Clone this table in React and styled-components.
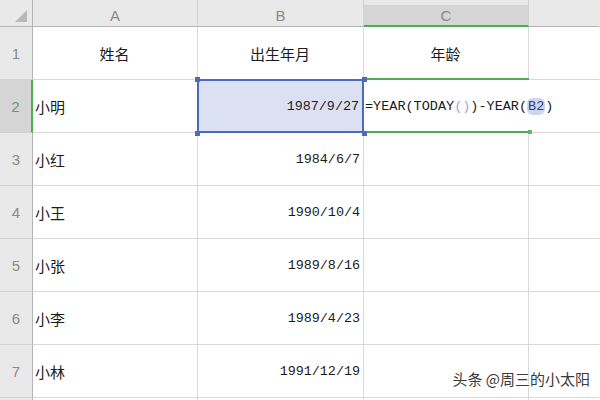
import React from 'react';
import styled, { createGlobalStyle, css } from 'styled-components';

const GlobalStyle = createGlobalStyle`
	html, body {
		margin: 0;
		padding: 0;
		background: #ffffff;
	}
	* {
		box-sizing: border-box;
	}
`;

const cjk = `"Noto Sans CJK SC", "Noto Sans", sans-serif`;
const mono = `"Liberation Mono", "Noto Sans CJK SC", monospace`;

const grid = '#d9d9d9';
const headBg = '#e9e9e9';
const headActive = '#d5d5d5';
const green = '#4caf50';
const blue = '#4a6bc0';

const rows = [
	{ name: '小明', date: '1987/9/27' },
	{ name: '小红', date: '1984/6/7' },
	{ name: '小王', date: '1990/10/4' },
	{ name: '小张', date: '1989/8/16' },
	{ name: '小李', date: '1989/4/23' },
	{ name: '小林', date: '1991/12/19' },
];

export default function App() {
	return (
		<>
			<GlobalStyle />
			<Sheet>
				<Corner>
					<svg width="12" height="12" viewBox="0 0 12 12">
						<polygon points="12,0 12,12 0,12" fill="#b9b9b9" />
					</svg>
				</Corner>
				<ColHead>A</ColHead>
				<ColHead>B</ColHead>
				<ColHead $active>C</ColHead>
				<ColHead $last />

				<RowHead>1</RowHead>
				<Cell $align="center">姓名</Cell>
				<Cell $align="center">出生年月</Cell>
				<Cell $align="center">年龄</Cell>
				<Cell $last />

				{rows.map((r, i) => {
					const n = i + 2;
					const first = i === 0;
					return (
						<React.Fragment key={n}>
							<RowHead $active={first}>{n}</RowHead>
							<Cell>{r.name}</Cell>
							<Cell $align="right" $mono $selected={first}>
								{r.date}
								{first && (
									<>
										<Handle $pos="tl" />
										<Handle $pos="tr" />
										<Handle $pos="bl" />
										<Handle $pos="br" />
									</>
								)}
							</Cell>
							{first ? (
								<EditCell>
									<Formula>
										=YEAR(TODAY<Soft>()</Soft>)-YEAR(<Ref>B2</Ref>)
									</Formula>
									<FillHandle />
								</EditCell>
							) : (
								<Cell />
							)}
							<Cell $last $noRight={first} />
						</React.Fragment>
					);
				})}

				<RowHead />
				<Cell />
				<Cell />
				<Cell />
				<Cell $last />

				<Watermark>头条 @周三的小太阳</Watermark>
			</Sheet>
		</>
	);
}

const Sheet = styled.div`
	position: relative;
	display: grid;
	grid-template-columns: 33px 165px 166px 165px 71px;
	grid-template-rows: 27px repeat(8, 53px);
	width: 600px;
	height: 400px;
	overflow: hidden;
	background: #ffffff;
`;

const Corner = styled.div`
	display: flex;
	align-items: flex-end;
	justify-content: flex-end;
	padding: 0 5px 4px 0;
	background: ${headBg};
	border-right: 1px solid #b4b4b4;
	border-bottom: 1px solid #b4b4b4;
`;

const ColHead = styled.div`
	display: flex;
	align-items: center;
	justify-content: center;
	padding-top: 5px;
	font-family: "Liberation Sans", "Noto Sans", sans-serif;
	font-size: 15px;
	color: #8a8a8a;
	background: ${headBg};
	border-right: 1px solid ${(p) => (p.$last ? 'transparent' : '#d2d2d2')};
	border-bottom: 1px solid #b4b4b4;
	${(p) =>
		p.$active &&
		css`
			background: linear-gradient(${headBg} 5px, ${headActive} 5px);
			border-bottom: 2px solid ${green};
		`}
`;

const RowHead = styled.div`
	display: flex;
	align-items: center;
	justify-content: center;
	font-family: "Liberation Sans", "Noto Sans", sans-serif;
	font-size: 15px;
	color: #8a8a8a;
	background: ${headBg};
	border-right: 1px solid #b4b4b4;
	border-bottom: 1px solid #d2d2d2;
	${(p) =>
		p.$active &&
		css`
			background: ${headActive};
			color: #5f9c7c;
			border-right: 2px solid ${green};
		`}
`;

const Cell = styled.div`
	position: relative;
	display: flex;
	align-items: center;
	justify-content: ${(p) =>
		p.$align === 'center' ? 'center' : p.$align === 'right' ? 'flex-end' : 'flex-start'};
	padding: 0 3px 0 2px;
	font-family: ${(p) => (p.$mono ? mono : cjk)};
	font-size: ${(p) => (p.$mono ? '13.4px' : '15px')};
	color: #1b1b1b;
	white-space: nowrap;
	border-right: 1px solid ${(p) => (p.$last || p.$noRight ? 'transparent' : grid)};
	border-bottom: 1px solid ${grid};
	${(p) =>
		p.$selected &&
		css`
			z-index: 2;
			padding-right: 4px;
			background: #dbe1f3;
			&::after {
				content: '';
				position: absolute;
				top: -1px;
				left: -1px;
				right: -1px;
				bottom: -1px;
				border: 2px solid ${blue};
				pointer-events: none;
			}
		`}
`;

const Handle = styled.span`
	position: absolute;
	z-index: 3;
	width: 5px;
	height: 5px;
	background: ${blue};
	${(p) => (p.$pos[0] === 't' ? 'top: -3px;' : 'bottom: -4px;')}
	${(p) => (p.$pos[1] === 'l' ? 'left: -3px;' : 'right: -4px;')}
`;

const EditCell = styled.div`
	position: relative;
	z-index: 1;
	display: flex;
	align-items: center;
	padding-left: 1px;
	border-bottom: 1px solid ${grid};
	&::before,
	&::after {
		content: '';
		position: absolute;
		left: -1px;
		right: 0;
		height: 2px;
		background: ${green};
	}
	&::before {
		top: -2px;
	}
	&::after {
		bottom: -1px;
	}
`;

const FillHandle = styled.span`
	position: absolute;
	right: -3px;
	bottom: -2px;
	width: 4px;
	height: 4px;
	background: #6bb26f;
`;

const Formula = styled.span`
	font-family: ${mono};
	font-size: 13.5px;
	color: #1b1b1b;
	white-space: nowrap;
`;

const Soft = styled.span`
	color: #9aa8d4;
`;

const Ref = styled.span`
	padding: 1px 1px;
	border-radius: 6px;
	background: #cdd6ef;
	color: #2c3f7a;
`;

const Watermark = styled.div`
	position: absolute;
	right: 10px;
	bottom: 11px;
	z-index: 5;
	font-family: ${cjk};
	font-size: 15px;
	color: #3a3a3a;
	white-space: nowrap;
	text-shadow:
		1px 0 0 #fff,
		-1px 0 0 #fff,
		0 1px 0 #fff,
		0 -1px 0 #fff;
`;
